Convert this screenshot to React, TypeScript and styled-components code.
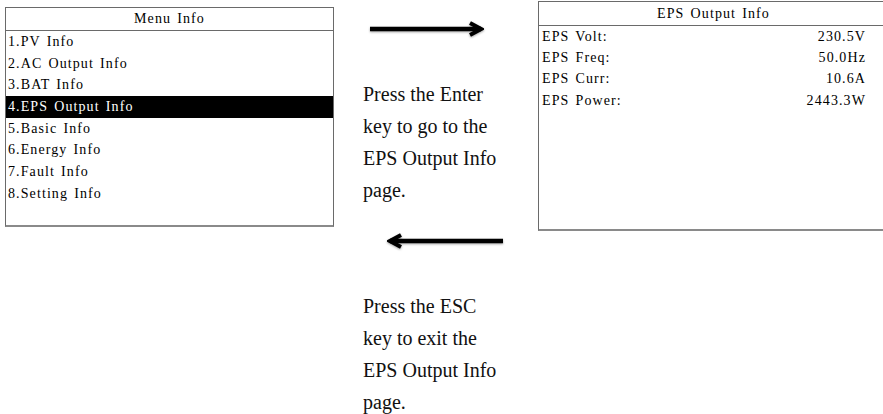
import React from "react";
import styled, { createGlobalStyle } from "styled-components";

const Global = createGlobalStyle`
  html, body { margin: 0; padding: 0; background: #fff; overflow: hidden; }
  body { width: 883px; height: 414px; }
`;

const Page = styled.div`
  display: flex;
  align-items: flex-start;
  width: 883px;
  height: 414px;
  overflow: hidden;
`;

const Screen = styled.div<{ $w: number; $h: number; $top: number; $left: number; $open?: boolean }>`
  flex: none;
  box-sizing: border-box;
  width: ${(p) => p.$w}px;
  height: ${(p) => p.$h}px;
  margin-top: ${(p) => p.$top}px;
  margin-left: ${(p) => p.$left}px;
  border: 1px solid #6a6a6a;
  border-right: ${(p) => (p.$open ? "none" : "1px solid #6a6a6a")};
  border-bottom: 2px solid #8a8a8a;
  font-family: "Liberation Serif", "Times New Roman", serif;
  font-size: 14px;
  letter-spacing: 1.1px;
  word-spacing: 1.5px;
  color: #000;
  display: flex;
  flex-direction: column;
`;

const ScreenTitle = styled.div<{ $h: number }>`
  height: ${(p) => p.$h}px;
  border-bottom: 1px solid #6a6a6a;
  display: flex;
  align-items: center;
  justify-content: center;
`;

const MenuItem = styled.div<{ $active?: boolean }>`
  height: 21.7px;
  display: flex;
  align-items: center;
  padding-left: 2px;
  background: ${(p) => (p.$active ? "#000" : "transparent")};
  color: ${(p) => (p.$active ? "#fff" : "#000")};
`;

const DataRow = styled.div`
  height: 21.4px;
  display: flex;
  align-items: center;
  justify-content: space-between;
  padding: 0 22px 0 3px;
`;

const Middle = styled.div`
  flex: none;
  width: 204px;
  display: flex;
  flex-direction: column;
  padding-top: 21px;
`;

const ArrowBox = styled.svg<{ $indent: number; $gap: number }>`
  display: block;
  margin-left: ${(p) => p.$indent}px;
  margin-top: ${(p) => p.$gap}px;
  filter: drop-shadow(0 1.5px 1.2px rgba(0, 0, 0, 0.35));
`;

const Caption = styled.p`
  margin: 41px 0 0 29px;
  width: 140px;
  font-family: "Liberation Serif", "Times New Roman", serif;
  font-size: 20px;
  line-height: 32px;
  color: #111;
`;

const Arrow = ({ dir, indent, gap, width }: { dir: "right" | "left"; indent: number; gap: number; width: number }) => {
  const h = 16;
  const m = h / 2;
  return (
    <ArrowBox $indent={indent} $gap={gap} width={width} height={h} viewBox={`0 0 ${width} ${h}`}>
      {dir === "right" ? (
        <>
          <line x1={2} y1={m} x2={width - 3} y2={m} stroke="#000" strokeWidth={4.5} />
          <polyline points={`${width - 14},2 ${width - 3},${m} ${width - 14},${h - 2}`} fill="none" stroke="#000" strokeWidth={4} strokeLinejoin="miter" />
        </>
      ) : (
        <>
          <line x1={3} y1={m} x2={width - 2} y2={m} stroke="#000" strokeWidth={4.5} />
          <polyline points={`14,2 3,${m} 14,${h - 2}`} fill="none" stroke="#000" strokeWidth={4} strokeLinejoin="miter" />
        </>
      )}
    </ArrowBox>
  );
};

const menu = [
  "1.PV Info",
  "2.AC Output Info",
  "3.BAT Info",
  "4.EPS Output Info",
  "5.Basic Info",
  "6.Energy Info",
  "7.Fault Info",
  "8.Setting Info",
];

const data = [
  ["EPS Volt:", "230.5V"],
  ["EPS Freq:", "50.0Hz"],
  ["EPS Curr:", "10.6A"],
  ["EPS Power:", "2443.3W"],
];

export default function App() {
  return (
    <>
      <Global />
      <Page>
        <Screen $w={329} $h={220} $top={7} $left={5}>
          <ScreenTitle $h={22}>Menu Info</ScreenTitle>
          {menu.map((m, i) => (
            <MenuItem key={m} $active={i === 3}>
              {m}
            </MenuItem>
          ))}
        </Screen>
        <Middle>
          <Arrow dir="right" indent={34} gap={0} width={116} />
          <Caption>Press the Enter key to go to the EPS Output Info page.</Caption>
          <Arrow dir="left" indent={53} gap={27} width={118} />
          <Caption>Press the ESC key to exit the EPS Output Info page.</Caption>
        </Middle>
        <Screen $w={350} $h={230} $top={1} $left={0} $open>
          <ScreenTitle $h={23}>EPS Output Info</ScreenTitle>
          {data.map(([k, v]) => (
            <DataRow key={k}>
              <span>{k}</span>
              <span>{v}</span>
            </DataRow>
          ))}
        </Screen>
      </Page>
    </>
  );
}
